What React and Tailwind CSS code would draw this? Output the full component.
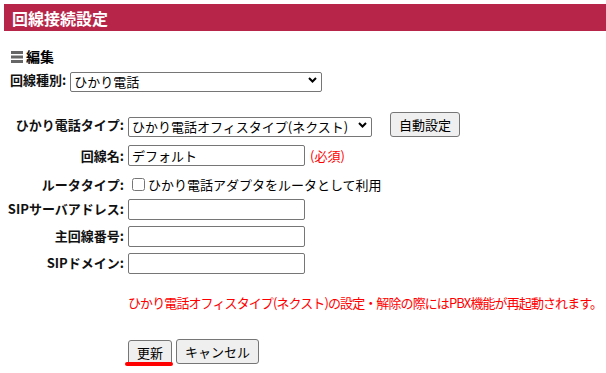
import { useState } from 'react'

const jp = { fontFamily: '"Noto Sans CJK JP", "Noto Sans", sans-serif' }

function Chevron() {
    return (
        <svg width="9" height="6" viewBox="0 0 9 6" className="absolute right-[5px] top-1/2 -translate-y-1/2 pointer-events-none">
            <path d="M1 1 L4.5 4.5 L8 1" stroke="#000" strokeWidth="2" fill="none" />
        </svg>
    )
}

function Sentaku({ value, width, options, onChange }) {
    return (
        <div className="relative" style={{ width }}>
            <select
                value={value}
                onChange={(e) => onChange(e.target.value)}
                className="appearance-none w-full h-[20px] border border-[#767676] rounded-[2px] bg-white pl-[3px] pr-[16px] text-[13px] leading-[18px] text-black outline-none"
            >
                {options.map((o) => <option key={o}>{o}</option>)}
            </select>
            <Chevron />
        </div>
    )
}

function Gyo({ label, children, className = '' }) {
    return (
        <div className={'flex items-center ' + className}>
            <label className="w-[124px] shrink-0 text-right pr-[4px] font-bold text-[13px] text-[#111]">{label}</label>
            {children}
        </div>
    )
}

const nyuryoku = 'w-[177px] h-[21px] border border-[#767676] rounded-[2px] bg-white px-[3px] text-[13px] outline-none'
const botan = 'h-[25px] border border-[#767676] rounded-[3px] bg-[#efefef] px-[8px] text-[13px] text-black'

export default function App() {
    const [shubetsu, setShubetsu] = useState('ひかり電話')
    const [taipu, setTaipu] = useState('ひかり電話オフィスタイプ(ネクスト)')
    const [mei, setMei] = useState('デフォルト')
    const [router, setRouter] = useState(false)

    return (
        <div className="w-[606px] h-[373px] bg-white pt-[4px] pl-[4px] overflow-hidden" style={jp}>
            <div className="h-[27px] bg-[#b72649] flex items-center pl-[8px]">
                <h1 className="text-white font-bold text-[16px]">回線接続設定</h1>
            </div>

            <div className="flex items-center gap-[3px] mt-[15px] pl-[7px]">
                <svg width="12" height="12" viewBox="0 0 12 12">
                    <rect x="0" y="0" width="12" height="3" fill="#666" />
                    <rect x="0" y="4.5" width="12" height="3" fill="#666" />
                    <rect x="0" y="9" width="12" height="3" fill="#666" />
                </svg>
                <span className="font-bold text-[14px] text-black">編集</span>
            </div>

            <div className="flex items-center mt-[1px] pl-[6px]">
                <span className="font-bold text-[13px] text-[#111] pr-[4px]">回線種別:</span>
                <Sentaku value={shubetsu} width={252} options={['ひかり電話', 'アナログ']} onChange={setShubetsu} />
            </div>

            <div className="mt-[20px]">
                <Gyo label="ひかり電話タイプ:">
                    <Sentaku value={taipu} width={244} options={['ひかり電話オフィスタイプ(ネクスト)', 'ひかり電話']} onChange={setTaipu} />
                    <button className={botan + ' ml-[18px]'}>自動設定</button>
                </Gyo>

                <Gyo label="回線名:" className="mt-[8px]">
                    <input className={nyuryoku} value={mei} onChange={(e) => setMei(e.target.value)} />
                    <span className="ml-[5px] text-[13px] text-[#ff0000]">(必須)</span>
                </Gyo>

                <Gyo label="ルータタイプ:" className="mt-[9px]">
                    <label className="flex items-center text-[13px] text-black">
                        <input type="checkbox" checked={router} onChange={(e) => setRouter(e.target.checked)} className="w-[13px] h-[13px] ml-[4px] mr-[3px]" />
                        ひかり電話アダプタをルータとして利用
                    </label>
                </Gyo>

                <Gyo label="SIPサーバアドレス:" className="mt-[4px]">
                    <input className={nyuryoku} />
                </Gyo>
                <Gyo label="主回線番号:" className="mt-[6px]">
                    <input className={nyuryoku} />
                </Gyo>
                <Gyo label="SIPドメイン:" className="mt-[6px]">
                    <input className={nyuryoku} />
                </Gyo>
            </div>

            <p className="mt-[19px] ml-[124px] text-[13px] tracking-[-0.9px] text-[#ff0000] whitespace-nowrap">
                ひかり電話オフィスタイプ(ネクスト)の設定・解除の際にはPBX機能が再起動されます。
            </p>

            <div className="flex gap-[4px] mt-[27px] ml-[124px]">
                <div className="relative">
                    <button className={botan}>更新</button>
                    <div className="absolute left-[-3px] top-[23px] w-[48px] h-[4px] rounded-full bg-[#ff0000]" />
                </div>
                <button className={botan}>キャンセル</button>
            </div>
        </div>
    )
}
